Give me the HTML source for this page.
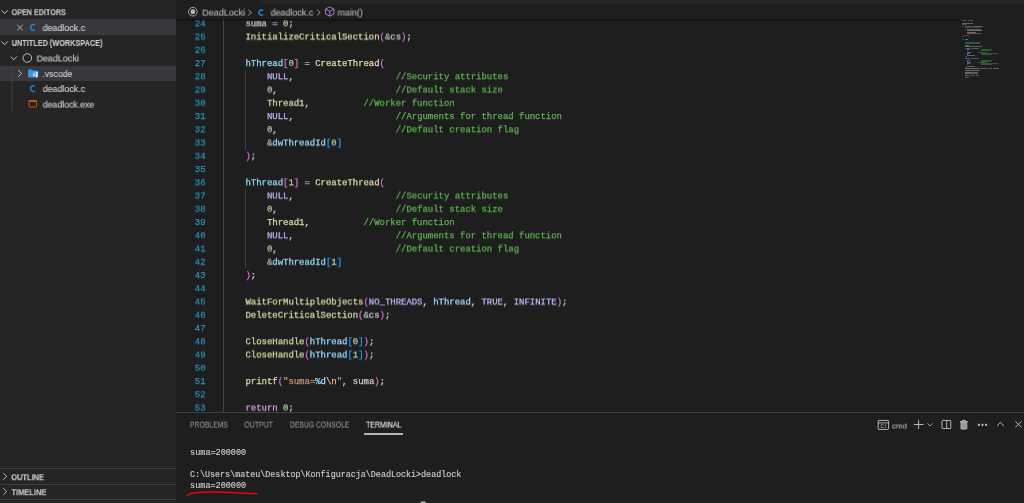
<!DOCTYPE html>
<html><head><meta charset="utf-8">
<style>
*{margin:0;padding:0;box-sizing:border-box}
html,body{width:1024px;height:503px;overflow:hidden;background:#1e1e1e}
body{position:relative;font-family:"Liberation Sans",sans-serif;color:#cccccc}
.abs{position:absolute}
.t{position:absolute;white-space:pre;transform-origin:0 0;will-change:transform;-webkit-text-stroke-width:0.15px}
#side{position:absolute;left:0;top:0;width:176px;height:503px;background:#252526}
.ln{position:absolute;left:0;width:205.60px;text-align:right;font-family:"Liberation Mono",monospace;font-size:8.95px;line-height:10px;color:#2B91AF;white-space:pre;will-change:transform;-webkit-text-stroke:0.25px #2B91AF}
.cl{position:absolute;left:224.30px;font-family:"Liberation Mono",monospace;font-size:8.95px;line-height:10px;color:#d4d4d4;white-space:pre;will-change:transform;-webkit-text-stroke-width:0.25px}
svg{position:absolute;overflow:visible}
</style></head><body>

<!-- ============ SIDEBAR ============ -->
<div id="side"></div>
<div class="abs" style="left:0;top:18.9px;width:176px;height:16.4px;background:#37373d"></div>
<div class="abs" style="left:0;top:66px;width:176px;height:14.6px;background:#37373d"></div>

<!-- chevrons down -->
<svg style="left:0;top:0" width="176" height="503" viewBox="0 0 176 503">
  <g fill="none" stroke="#c5c5c5" stroke-width="0.95">
    <path d="M1.5 10.2 L4.7 13.6 L7.9 10.2"/>
    <path d="M1.5 41.3 L4.7 44.7 L7.9 41.3"/>
    <path d="M10.9 56.5 L13.8 59.9 L16.7 56.5"/>
    <!-- chevrons right -->
    <path d="M18.3 70.2 L21.5 73.5 L18.3 76.8"/>
    <path d="M3.4 473.2 L6.7 476.4 L3.4 479.6"/>
    <path d="M3.4 488.3 L6.7 491.5 L3.4 494.7"/>
    <!-- close X -->
    <path d="M17.2 24.8 L22.8 30.4 M22.8 24.8 L17.2 30.4" stroke-width="0.85"/>
    <!-- root folder circle -->
    <circle cx="27.3" cy="58" r="4.3" stroke-width="0.95"/>
  </g>
  <!-- C icons -->
  <g fill="none" stroke="#1a86d4" stroke-width="1.4">
    <path d="M34.9 25.2 A2.55 3 0 1 0 34.9 29.8"/>
    <path d="M34.7 86.4 A2.5 2.9 0 1 0 34.7 91"/>
  </g>
  <!-- tree indent guide -->
  <path d="M11.9 66 L11.9 111" stroke="#4a4a4a" stroke-width="0.8"/>
  <!-- .vscode folder -->
  <path d="M28.1 70.1 Q28.1 69.4 28.8 69.4 L32 69.4 L33 70.5 L37.4 70.5 Q38.1 70.5 38.1 71.2 L38.1 76.8 Q38.1 77.5 37.4 77.5 L28.8 77.5 Q28.1 77.5 28.1 76.8 Z" fill="#3a96e8"/>
  <path d="M36.2 71.6 L37.8 72.2 L37.8 76.8 L36.2 77.4 Z" fill="#e4f1fd"/>
  <path d="M36.4 72.3 L33.2 74.5 L36.4 76.7 M32.8 73.2 L36 76.2 M32.8 75.8 L34.4 74.5" fill="none" stroke="#d6e9fb" stroke-width="0.8" stroke-linejoin="round"/>
  <!-- exe icon -->
  <rect x="29" y="100.5" width="7.6" height="6.5" rx="0.7" fill="none" stroke="#cc4b1c" stroke-width="1"/>
  <rect x="28.6" y="100.1" width="8.4" height="2" rx="0.5" fill="#cc4b1c"/>
  <!-- section borders -->
  <path d="M0 468.5 L176 468.5 M0 484.5 L176 484.5 M0 499.5 L176 499.5" stroke="#3f3f40" stroke-width="1"/>
</svg>
<div class="t" style="left:11px;top:7px;font-family:'Liberation Sans',sans-serif;font-size:8.70px;line-height:10px;color:#c5c5c5;font-weight:bold;transform:translate(0.61px,0.20px) scaleX(0.8274);">OPEN EDITORS</div>
<div class="t" style="left:42px;top:23px;font-family:'Liberation Sans',sans-serif;font-size:9.10px;line-height:10px;color:#cccccc;transform:translate(0.52px,0.00px) scaleX(0.9817);">deadlock.c</div>
<div class="t" style="left:11px;top:38px;font-family:'Liberation Sans',sans-serif;font-size:8.70px;line-height:10px;color:#c5c5c5;font-weight:bold;transform:translate(0.76px,0.00px) scaleX(0.8398);">UNTITLED (WORKSPACE)</div>
<div class="t" style="left:36px;top:53px;font-family:'Liberation Sans',sans-serif;font-size:9.10px;line-height:10px;color:#cccccc;transform:translate(0.56px,0.50px) scaleX(0.9824);">DeadLocki</div>
<div class="t" style="left:42px;top:69px;font-family:'Liberation Sans',sans-serif;font-size:9.10px;line-height:10px;color:#cccccc;transform:translate(0.42px,0.00px) scaleX(0.9554);">.vscode</div>
<div class="t" style="left:42px;top:84px;font-family:'Liberation Sans',sans-serif;font-size:9.10px;line-height:10px;color:#cccccc;transform:translate(0.72px,0.00px) scaleX(0.9747);">deadlock.c</div>
<div class="t" style="left:42px;top:99px;font-family:'Liberation Sans',sans-serif;font-size:9.10px;line-height:10px;color:#cccccc;transform:translate(0.73px,0.60px) scaleX(0.9612);">deadlock.exe</div>
<div class="t" style="left:11px;top:472px;font-family:'Liberation Sans',sans-serif;font-size:8.70px;line-height:10px;color:#c5c5c5;font-weight:bold;transform:translate(0.20px,0.20px) scaleX(0.8614);">OUTLINE</div>
<div class="t" style="left:11px;top:487px;font-family:'Liberation Sans',sans-serif;font-size:8.70px;line-height:10px;color:#c5c5c5;font-weight:bold;transform:translate(0.53px,0.20px) scaleX(0.8588);">TIMELINE</div>

<!-- ============ EDITOR ============ -->
<!-- indent guides -->
<div class="abs" style="left:223.1px;top:19px;width:1.2px;height:393px;background:#444444"></div>
<div class="abs" style="left:244.6px;top:69.5px;width:1.2px;height:79.5px;background:#404040"></div>
<div class="abs" style="left:244.6px;top:188.7px;width:1.2px;height:79.5px;background:#404040"></div>
<div class="ln" style="top:19px;transform:translateY(0.20px) scaleX(.9999)">24</div><div class="cl" style="top:19px;transform:translateY(0.20px) scaleX(.9999)">    <span style="color:#C8C8C8">suma</span><span style="color:#B4B4B4"> = </span><span style="color:#B5CEA8">0</span><span style="color:#D4D4D4">;</span></div>
<div class="ln" style="top:32px;transform:translateY(0.45px) scaleX(.9999)">25</div><div class="cl" style="top:32px;transform:translateY(0.45px) scaleX(.9999)">    <span style="color:#DCDCAA">InitializeCriticalSection</span><span style="color:#DA70D6">(</span><span style="color:#B4B4B4">&amp;</span><span style="color:#C8C8C8">cs</span><span style="color:#DA70D6">)</span><span style="color:#D4D4D4">;</span></div>
<div class="ln" style="top:45px;transform:translateY(0.70px) scaleX(.9999)">26</div><div class="cl" style="top:45px;transform:translateY(0.70px) scaleX(.9999)"></div>
<div class="ln" style="top:58px;transform:translateY(0.95px) scaleX(.9999)">27</div><div class="cl" style="top:58px;transform:translateY(0.95px) scaleX(.9999)">    <span style="color:#9CDCFE">hThread</span><span style="color:#DA70D6">[</span><span style="color:#B5CEA8">0</span><span style="color:#DA70D6">]</span><span style="color:#B4B4B4"> = </span><span style="color:#DCDCAA">CreateThread</span><span style="color:#DA70D6">(</span></div>
<div class="ln" style="top:72px;transform:translateY(0.20px) scaleX(.9999)">28</div><div class="cl" style="top:72px;transform:translateY(0.20px) scaleX(.9999)">        <span style="color:#BEB7FF">NULL</span><span style="color:#D4D4D4">,</span>                   <span style="color:#5DB250">//Security attributes</span></div>
<div class="ln" style="top:85px;transform:translateY(0.45px) scaleX(.9999)">29</div><div class="cl" style="top:85px;transform:translateY(0.45px) scaleX(.9999)">        <span style="color:#B5CEA8">0</span><span style="color:#D4D4D4">,</span>                      <span style="color:#5DB250">//Default stack size</span></div>
<div class="ln" style="top:98px;transform:translateY(0.70px) scaleX(.9999)">30</div><div class="cl" style="top:98px;transform:translateY(0.70px) scaleX(.9999)">        <span style="color:#DCDCAA">Thread1</span><span style="color:#D4D4D4">,</span>          <span style="color:#5DB250">//Worker function</span></div>
<div class="ln" style="top:111px;transform:translateY(0.95px) scaleX(.9999)">31</div><div class="cl" style="top:111px;transform:translateY(0.95px) scaleX(.9999)">        <span style="color:#BEB7FF">NULL</span><span style="color:#D4D4D4">,</span>                   <span style="color:#5DB250">//Arguments for thread function</span></div>
<div class="ln" style="top:125px;transform:translateY(0.20px) scaleX(.9999)">32</div><div class="cl" style="top:125px;transform:translateY(0.20px) scaleX(.9999)">        <span style="color:#B5CEA8">0</span><span style="color:#D4D4D4">,</span>                      <span style="color:#5DB250">//Default creation flag</span></div>
<div class="ln" style="top:138px;transform:translateY(0.45px) scaleX(.9999)">33</div><div class="cl" style="top:138px;transform:translateY(0.45px) scaleX(.9999)">        <span style="color:#B4B4B4">&amp;</span><span style="color:#9CDCFE">dwThreadId</span><span style="color:#179FFF">[</span><span style="color:#B5CEA8">0</span><span style="color:#179FFF">]</span></div>
<div class="ln" style="top:151px;transform:translateY(0.70px) scaleX(.9999)">34</div><div class="cl" style="top:151px;transform:translateY(0.70px) scaleX(.9999)">    <span style="color:#DA70D6">)</span><span style="color:#D4D4D4">;</span></div>
<div class="ln" style="top:164px;transform:translateY(0.95px) scaleX(.9999)">35</div><div class="cl" style="top:164px;transform:translateY(0.95px) scaleX(.9999)"></div>
<div class="ln" style="top:178px;transform:translateY(0.20px) scaleX(.9999)">36</div><div class="cl" style="top:178px;transform:translateY(0.20px) scaleX(.9999)">    <span style="color:#9CDCFE">hThread</span><span style="color:#DA70D6">[</span><span style="color:#B5CEA8">1</span><span style="color:#DA70D6">]</span><span style="color:#B4B4B4"> = </span><span style="color:#DCDCAA">CreateThread</span><span style="color:#DA70D6">(</span></div>
<div class="ln" style="top:191px;transform:translateY(0.45px) scaleX(.9999)">37</div><div class="cl" style="top:191px;transform:translateY(0.45px) scaleX(.9999)">        <span style="color:#BEB7FF">NULL</span><span style="color:#D4D4D4">,</span>                   <span style="color:#5DB250">//Security attributes</span></div>
<div class="ln" style="top:204px;transform:translateY(0.70px) scaleX(.9999)">38</div><div class="cl" style="top:204px;transform:translateY(0.70px) scaleX(.9999)">        <span style="color:#B5CEA8">0</span><span style="color:#D4D4D4">,</span>                      <span style="color:#5DB250">//Default stack size</span></div>
<div class="ln" style="top:217px;transform:translateY(0.95px) scaleX(.9999)">39</div><div class="cl" style="top:217px;transform:translateY(0.95px) scaleX(.9999)">        <span style="color:#DCDCAA">Thread1</span><span style="color:#D4D4D4">,</span>          <span style="color:#5DB250">//Worker function</span></div>
<div class="ln" style="top:231px;transform:translateY(0.20px) scaleX(.9999)">40</div><div class="cl" style="top:231px;transform:translateY(0.20px) scaleX(.9999)">        <span style="color:#BEB7FF">NULL</span><span style="color:#D4D4D4">,</span>                   <span style="color:#5DB250">//Arguments for thread function</span></div>
<div class="ln" style="top:244px;transform:translateY(0.45px) scaleX(.9999)">41</div><div class="cl" style="top:244px;transform:translateY(0.45px) scaleX(.9999)">        <span style="color:#B5CEA8">0</span><span style="color:#D4D4D4">,</span>                      <span style="color:#5DB250">//Default creation flag</span></div>
<div class="ln" style="top:257px;transform:translateY(0.70px) scaleX(.9999)">42</div><div class="cl" style="top:257px;transform:translateY(0.70px) scaleX(.9999)">        <span style="color:#B4B4B4">&amp;</span><span style="color:#9CDCFE">dwThreadId</span><span style="color:#179FFF">[</span><span style="color:#B5CEA8">1</span><span style="color:#179FFF">]</span></div>
<div class="ln" style="top:270px;transform:translateY(0.95px) scaleX(.9999)">43</div><div class="cl" style="top:270px;transform:translateY(0.95px) scaleX(.9999)">    <span style="color:#DA70D6">)</span><span style="color:#D4D4D4">;</span></div>
<div class="ln" style="top:284px;transform:translateY(0.20px) scaleX(.9999)">44</div><div class="cl" style="top:284px;transform:translateY(0.20px) scaleX(.9999)"></div>
<div class="ln" style="top:297px;transform:translateY(0.45px) scaleX(.9999)">45</div><div class="cl" style="top:297px;transform:translateY(0.45px) scaleX(.9999)">    <span style="color:#DCDCAA">WaitForMultipleObjects</span><span style="color:#DA70D6">(</span><span style="color:#BEB7FF">NO_THREADS</span><span style="color:#D4D4D4">, </span><span style="color:#9CDCFE">hThread</span><span style="color:#D4D4D4">, </span><span style="color:#BEB7FF">TRUE</span><span style="color:#D4D4D4">, </span><span style="color:#BEB7FF">INFINITE</span><span style="color:#DA70D6">)</span><span style="color:#D4D4D4">;</span></div>
<div class="ln" style="top:310px;transform:translateY(0.70px) scaleX(.9999)">46</div><div class="cl" style="top:310px;transform:translateY(0.70px) scaleX(.9999)">    <span style="color:#DCDCAA">DeleteCriticalSection</span><span style="color:#DA70D6">(</span><span style="color:#B4B4B4">&amp;</span><span style="color:#C8C8C8">cs</span><span style="color:#DA70D6">)</span><span style="color:#D4D4D4">;</span></div>
<div class="ln" style="top:323px;transform:translateY(0.95px) scaleX(.9999)">47</div><div class="cl" style="top:323px;transform:translateY(0.95px) scaleX(.9999)"></div>
<div class="ln" style="top:337px;transform:translateY(0.20px) scaleX(.9999)">48</div><div class="cl" style="top:337px;transform:translateY(0.20px) scaleX(.9999)">    <span style="color:#DCDCAA">CloseHandle</span><span style="color:#DA70D6">(</span><span style="color:#9CDCFE">hThread</span><span style="color:#179FFF">[</span><span style="color:#B5CEA8">0</span><span style="color:#179FFF">]</span><span style="color:#DA70D6">)</span><span style="color:#D4D4D4">;</span></div>
<div class="ln" style="top:350px;transform:translateY(0.45px) scaleX(.9999)">49</div><div class="cl" style="top:350px;transform:translateY(0.45px) scaleX(.9999)">    <span style="color:#DCDCAA">CloseHandle</span><span style="color:#DA70D6">(</span><span style="color:#9CDCFE">hThread</span><span style="color:#179FFF">[</span><span style="color:#B5CEA8">1</span><span style="color:#179FFF">]</span><span style="color:#DA70D6">)</span><span style="color:#D4D4D4">;</span></div>
<div class="ln" style="top:363px;transform:translateY(0.70px) scaleX(.9999)">50</div><div class="cl" style="top:363px;transform:translateY(0.70px) scaleX(.9999)"></div>
<div class="ln" style="top:376px;transform:translateY(0.95px) scaleX(.9999)">51</div><div class="cl" style="top:376px;transform:translateY(0.95px) scaleX(.9999)">    <span style="color:#DCDCAA">printf</span><span style="color:#DA70D6">(</span><span style="color:#CE9178">"suma=</span><span style="color:#9CDCFE">%d</span><span style="color:#D7BA7D">\n</span><span style="color:#CE9178">"</span><span style="color:#D4D4D4">, </span><span style="color:#C8C8C8">suma</span><span style="color:#DA70D6">)</span><span style="color:#D4D4D4">;</span></div>
<div class="ln" style="top:390px;transform:translateY(0.20px) scaleX(.9999)">52</div><div class="cl" style="top:390px;transform:translateY(0.20px) scaleX(.9999)"></div>
<div class="ln" style="top:403px;transform:translateY(0.45px) scaleX(.9999)">53</div><div class="cl" style="top:403px;transform:translateY(0.45px) scaleX(.9999)">    <span style="color:#D8A0DF">return</span> <span style="color:#B5CEA8">0</span><span style="color:#D4D4D4">;</span></div>
<!-- minimap -->
<div class="abs" style="left:962.35px;top:19.71px;width:4.87px;height:1.0px;background:#8a8a8a;opacity:.45"></div>
<div class="abs" style="left:967.92px;top:19.71px;width:5.57px;height:1.0px;background:#a87860;opacity:.45"></div>
<div class="abs" style="left:962.35px;top:22.91px;width:11.13px;height:1.0px;background:#a8c8d8;opacity:.45"></div>
<div class="abs" style="left:962.35px;top:24.30px;width:4.87px;height:1.0px;background:#3aa898;opacity:.45"></div>
<div class="abs" style="left:962.35px;top:25.70px;width:2.09px;height:1.0px;background:#30b0a0;opacity:.45"></div>
<div class="abs" style="left:965.13px;top:25.70px;width:6.96px;height:1.0px;background:#8fc8a0;opacity:.45"></div>
<div class="abs" style="left:972.79px;top:25.70px;width:9.74px;height:1.0px;background:#a0b890;opacity:.45"></div>
<div class="abs" style="left:965.13px;top:27.37px;width:15.31px;height:1.0px;background:#686868;opacity:.45"></div>
<div class="abs" style="left:965.13px;top:28.76px;width:0.83px;height:1.0px;background:#909090;opacity:.45"></div>
<div class="abs" style="left:967.22px;top:28.76px;width:13.92px;height:1.0px;background:#b0a878;opacity:.45"></div>
<div class="abs" style="left:967.22px;top:30.43px;width:14.61px;height:1.0px;background:#d8d8a8;opacity:.45"></div>
<div class="abs" style="left:967.22px;top:31.82px;width:9.05px;height:1.0px;background:#d0d0a0;opacity:.45"></div>
<div class="abs" style="left:967.22px;top:32.93px;width:13.92px;height:1.0px;background:#a8a080;opacity:.45"></div>
<div class="abs" style="left:965.13px;top:34.60px;width:4.17px;height:1.0px;background:#b080c0;opacity:.45"></div>
<div class="abs" style="left:962.35px;top:35.72px;width:1.39px;height:1.0px;background:#707070;opacity:.45"></div>
<div class="abs" style="left:962.35px;top:39.19px;width:1.39px;height:1.0px;background:#4a8ad0;opacity:.45"></div>
<div class="abs" style="left:964.85px;top:39.19px;width:3.06px;height:1.0px;background:#c8c8a0;opacity:.45"></div>
<div class="abs" style="left:965.13px;top:41.98px;width:14.61px;height:1.0px;background:#30a090;opacity:.45"></div>
<div class="abs" style="left:965.13px;top:42.95px;width:15.31px;height:1.0px;background:#3a98b0;opacity:.45"></div>
<div class="abs" style="left:965.13px;top:45.18px;width:3.48px;height:1.0px;background:#d0d0d0;opacity:.45"></div>
<div class="abs" style="left:965.13px;top:46.29px;width:16.70px;height:1.0px;background:#b8b890;opacity:.45"></div>
<div class="abs" style="left:965.13px;top:47.54px;width:4.87px;height:1.0px;background:#70b0e0;opacity:.45"></div>
<div class="abs" style="left:970.70px;top:47.54px;width:8.35px;height:1.0px;background:#a0a080;opacity:.45"></div>
<div class="abs" style="left:967.22px;top:49.35px;width:2.37px;height:1.0px;background:#a8a0e8;opacity:.45"></div>
<div class="abs" style="left:981.14px;top:49.35px;width:10.44px;height:1.0px;background:#4a9a40;opacity:.45"></div>
<div class="abs" style="left:967.22px;top:50.47px;width:0.83px;height:1.0px;background:#a0b090;opacity:.45"></div>
<div class="abs" style="left:981.14px;top:50.47px;width:9.74px;height:1.0px;background:#4a9a40;opacity:.45"></div>
<div class="abs" style="left:967.22px;top:51.72px;width:4.17px;height:1.0px;background:#c0c098;opacity:.45"></div>
<div class="abs" style="left:977.66px;top:51.72px;width:9.05px;height:1.0px;background:#4a9a40;opacity:.45"></div>
<div class="abs" style="left:967.22px;top:52.97px;width:2.37px;height:1.0px;background:#a8a0e8;opacity:.45"></div>
<div class="abs" style="left:981.14px;top:52.97px;width:16.70px;height:1.0px;background:#4a9a40;opacity:.45"></div>
<div class="abs" style="left:967.22px;top:54.08px;width:0.83px;height:1.0px;background:#a0b090;opacity:.45"></div>
<div class="abs" style="left:981.14px;top:54.08px;width:11.13px;height:1.0px;background:#4a9a40;opacity:.45"></div>
<div class="abs" style="left:967.22px;top:55.20px;width:7.65px;height:1.0px;background:#80c0e8;opacity:.45"></div>
<div class="abs" style="left:965.13px;top:56.31px;width:1.39px;height:1.0px;background:#a070a8;opacity:.45"></div>
<div class="abs" style="left:965.13px;top:58.26px;width:4.87px;height:1.0px;background:#70b0e0;opacity:.45"></div>
<div class="abs" style="left:970.70px;top:58.26px;width:8.35px;height:1.0px;background:#a0a080;opacity:.45"></div>
<div class="abs" style="left:967.22px;top:59.93px;width:2.37px;height:1.0px;background:#a8a0e8;opacity:.45"></div>
<div class="abs" style="left:981.14px;top:59.93px;width:10.44px;height:1.0px;background:#4a9a40;opacity:.45"></div>
<div class="abs" style="left:967.22px;top:61.04px;width:0.83px;height:1.0px;background:#a0b090;opacity:.45"></div>
<div class="abs" style="left:981.14px;top:61.04px;width:9.74px;height:1.0px;background:#4a9a40;opacity:.45"></div>
<div class="abs" style="left:967.22px;top:62.16px;width:4.17px;height:1.0px;background:#c0c098;opacity:.45"></div>
<div class="abs" style="left:977.66px;top:62.16px;width:9.05px;height:1.0px;background:#4a9a40;opacity:.45"></div>
<div class="abs" style="left:967.22px;top:63.27px;width:2.37px;height:1.0px;background:#a8a0e8;opacity:.45"></div>
<div class="abs" style="left:981.14px;top:63.27px;width:16.70px;height:1.0px;background:#4a9a40;opacity:.45"></div>
<div class="abs" style="left:967.22px;top:64.38px;width:0.83px;height:1.0px;background:#a0b090;opacity:.45"></div>
<div class="abs" style="left:981.14px;top:64.38px;width:11.13px;height:1.0px;background:#4a9a40;opacity:.45"></div>
<div class="abs" style="left:967.22px;top:65.50px;width:7.65px;height:1.0px;background:#80c0e8;opacity:.45"></div>
<div class="abs" style="left:965.13px;top:66.75px;width:1.39px;height:1.0px;background:#a070a8;opacity:.45"></div>
<div class="abs" style="left:965.13px;top:68.42px;width:13.92px;height:1.0px;background:#c8c898;opacity:.45"></div>
<div class="abs" style="left:979.74px;top:68.42px;width:7.65px;height:1.0px;background:#a8a0e0;opacity:.45"></div>
<div class="abs" style="left:988.09px;top:68.42px;width:4.17px;height:1.0px;background:#80b8e0;opacity:.45"></div>
<div class="abs" style="left:992.96px;top:68.42px;width:5.57px;height:1.0px;background:#a8a0e0;opacity:.45"></div>
<div class="abs" style="left:965.13px;top:69.53px;width:14.61px;height:1.0px;background:#c8c898;opacity:.45"></div>
<div class="abs" style="left:965.13px;top:72.18px;width:6.26px;height:1.0px;background:#c8c898;opacity:.45"></div>
<div class="abs" style="left:971.39px;top:72.18px;width:6.26px;height:1.0px;background:#80b8e0;opacity:.45"></div>
<div class="abs" style="left:965.13px;top:73.29px;width:6.26px;height:1.0px;background:#c8c898;opacity:.45"></div>
<div class="abs" style="left:971.39px;top:73.29px;width:6.26px;height:1.0px;background:#80b8e0;opacity:.45"></div>
<div class="abs" style="left:965.13px;top:74.96px;width:4.17px;height:1.0px;background:#c8c898;opacity:.45"></div>
<div class="abs" style="left:970.00px;top:74.96px;width:4.87px;height:1.0px;background:#b88060;opacity:.45"></div>
<div class="abs" style="left:976.27px;top:74.96px;width:2.78px;height:1.0px;background:#a0a0a0;opacity:.45"></div>
<div class="abs" style="left:965.13px;top:77.46px;width:2.78px;height:1.0px;background:#b880c0;opacity:.45"></div>
<div class="abs" style="left:968.61px;top:77.46px;width:0.97px;height:1.0px;background:#a0b890;opacity:.45"></div>
<div class="abs" style="left:962.35px;top:78.58px;width:0.83px;height:1.0px;background:#808080;opacity:.45"></div>
<!-- tab strip + breadcrumbs -->
<div class="abs" style="left:176px;top:0;width:848px;height:19.4px;background:#1e1e1e"></div><div class="abs" style="left:176px;top:0;width:783px;height:26px;overflow:hidden"><div class="abs" style="left:0;top:0;width:783px;height:19.4px;background:#1e1e1e;box-shadow:0 1px 2px rgba(0,0,0,0.6)"></div></div>
<div class="abs" style="left:260px;top:0;width:764px;height:4.4px;background:#252526"></div>
<svg style="left:176px;top:0" width="848" height="20" viewBox="176 0 848 20">
  <circle cx="192.85" cy="11.7" r="4.3" fill="none" stroke="#a8a8a8" stroke-width="0.95"/>
  <circle cx="192.85" cy="11.7" r="2.45" fill="#a9b9c4"/>
  <g fill="none" stroke="#a5a5a5" stroke-width="0.95">
    <path d="M248.3 9.7 L251.3 12.5 L248.3 15.3"/>
    <path d="M317.1 9.7 L320.1 12.5 L317.1 15.3"/>
  </g>
  <path d="M263.1 10.7 A2.45 2.6 0 1 0 263.1 14.4" fill="none" stroke="#1a86d4" stroke-width="1.5"/>
  <path d="M329.75 6.9 L334 9.1 L334 13.9 L329.75 16.2 L325.5 13.9 L325.5 9.1 Z M325.5 9.1 L329.75 11.4 L334 9.1 M329.75 11.4 L329.75 16.2" fill="none" stroke="#b180d7" stroke-width="0.95" stroke-linejoin="round"/>
</svg>
<div class="t" style="left:202px;top:7px;font-family:'Liberation Sans',sans-serif;font-size:9.10px;line-height:10px;color:#b2b2b2;transform:translate(0.15px,0.60px) scaleX(0.9980);">DeadLocki</div>
<div class="t" style="left:270px;top:7px;font-family:'Liberation Sans',sans-serif;font-size:9.10px;line-height:10px;color:#b2b2b2;transform:translate(0.62px,0.60px) scaleX(0.9794);">deadlock.c</div>
<div class="t" style="left:337px;top:7px;font-family:'Liberation Sans',sans-serif;font-size:9.10px;line-height:10px;color:#b2b2b2;transform:translate(0.52px,0.60px) scaleX(0.9822);">main()</div>
<!-- redraw sidebar header texts hidden by top strip? (none) -->

<!-- ============ PANEL ============ -->
<div class="abs" style="left:176px;top:412px;width:848px;height:1px;background:#3e3e3e"></div>
<div class="abs" style="left:364.4px;top:433.4px;width:38.7px;height:1.3px;background:#b4b4b4"></div>
<svg style="left:870px;top:410px" width="154" height="30" viewBox="870 410 154 30">
  <g fill="none" stroke="#c5c5c5" stroke-width="0.9">
    <!-- terminal icon -->
    <rect x="878.2" y="420.45" width="10.4" height="9" rx="0.8"/>
    <path d="M878.2 422.9 L888.6 422.9" stroke-width="0.8"/>
    <!-- plus -->
    <path d="M918.6 419.8 L918.6 429.1 M913.8 424.5 L923.5 424.5"/>
    <!-- chevron down -->
    <path d="M927.4 423.3 L930.05 426 L932.7 423.3" stroke-width="0.8"/>
    <!-- split -->
    <rect x="941.95" y="420.45" width="8.8" height="8.1" rx="0.6"/>
    <path d="M946.7 420.4 L946.7 428.6"/>
    <!-- caret up -->
    <path d="M997.1 426 L1000.45 422.3 L1003.8 426"/>
    <!-- close -->
    <path d="M1015.3 421.2 L1021.7 427.4 M1021.7 421.2 L1015.3 427.4"/>
  </g>
  <text x="880.4" y="428" font-family="Liberation Sans" font-size="4.6" fill="#c5c5c5">C:\</text>
  <!-- trash -->
  <path d="M960 421.6 L967.8 421.6 M962.5 421.6 L962.5 420.3 L965.3 420.3 L965.3 421.6" stroke="#c5c5c5" stroke-width="0.9" fill="none"/>
  <path d="M960.8 422 L960.8 428.6 Q960.8 429.3 961.5 429.3 L966.3 429.3 Q967 429.3 967 428.6 L967 422 Z" fill="#9a9a9a" stroke="#b8b8b8" stroke-width="0.6"/>
  <!-- dots -->
  <rect x="977.9" y="423.8" width="2" height="2.1" fill="#b8b8b8"/>
  <rect x="981.5" y="423.8" width="2" height="2.1" fill="#b8b8b8"/>
  <rect x="985.1" y="423.8" width="2" height="2.1" fill="#b8b8b8"/>
</svg>
<div class="t" style="left:189px;top:419px;font-family:'Liberation Sans',sans-serif;font-size:8.30px;line-height:10px;color:#9c9c9c;transform:translate(0.94px,0.60px) scaleX(0.8210);-webkit-text-stroke-width:0.05px;">PROBLEMS</div>
<div class="t" style="left:244px;top:419px;font-family:'Liberation Sans',sans-serif;font-size:8.30px;line-height:10px;color:#9c9c9c;transform:translate(0.17px,0.60px) scaleX(0.8470);-webkit-text-stroke-width:0.05px;">OUTPUT</div>
<div class="t" style="left:289px;top:419px;font-family:'Liberation Sans',sans-serif;font-size:8.30px;line-height:10px;color:#9c9c9c;transform:translate(0.84px,0.60px) scaleX(0.8238);-webkit-text-stroke-width:0.05px;">DEBUG CONSOLE</div>
<div class="t" style="left:366px;top:419px;font-family:'Liberation Sans',sans-serif;font-size:8.30px;line-height:10px;color:#e7e7e7;transform:translate(0.04px,0.60px) scaleX(0.8458);">TERMINAL</div>
<div class="t" style="left:891px;top:421px;font-family:'Liberation Sans',sans-serif;font-size:8.00px;line-height:9px;color:#cccccc;transform:translate(0.97px,0.50px) scaleX(0.9748);-webkit-text-stroke-width:0;">cmd</div>
<div class="t" style="left:190px;top:447px;font-family:'Liberation Mono',monospace;font-size:8.37px;line-height:10px;color:#cccccc;transform:translate(0.12px,0.65px) scaleX(1.0153);">suma=200000</div>
<div class="t" style="left:189px;top:470px;font-family:'Liberation Mono',monospace;font-size:8.37px;line-height:10px;color:#cccccc;transform:translate(0.94px,0.35px) scaleX(1.0017);">C:\Users\mateu\Desktop\Konfiguracja\DeadLocki&gt;deadlock</div>
<div class="t" style="left:190px;top:481px;font-family:'Liberation Mono',monospace;font-size:8.37px;line-height:10px;color:#cccccc;transform:translate(0.12px,0.30px) scaleX(1.0153);">suma=200000</div>
<svg style="left:0;top:0" width="1024" height="503" viewBox="0 0 1024 503"><path d="M186.8 495.6 C189 494.3 191.5 493.3 194.6 492.8 C201 492 209 492.1 216.6 492.1 C224 492.1 231 492.7 238.6 493 C245 493.3 251 493.5 256.8 493.7" fill="none" stroke="#e00808" stroke-width="1.5" stroke-linecap="round"/>
<rect x="420.8" y="501.5" width="4.7" height="1.5" fill="#b8b8b8"/></svg>

</body></html>
